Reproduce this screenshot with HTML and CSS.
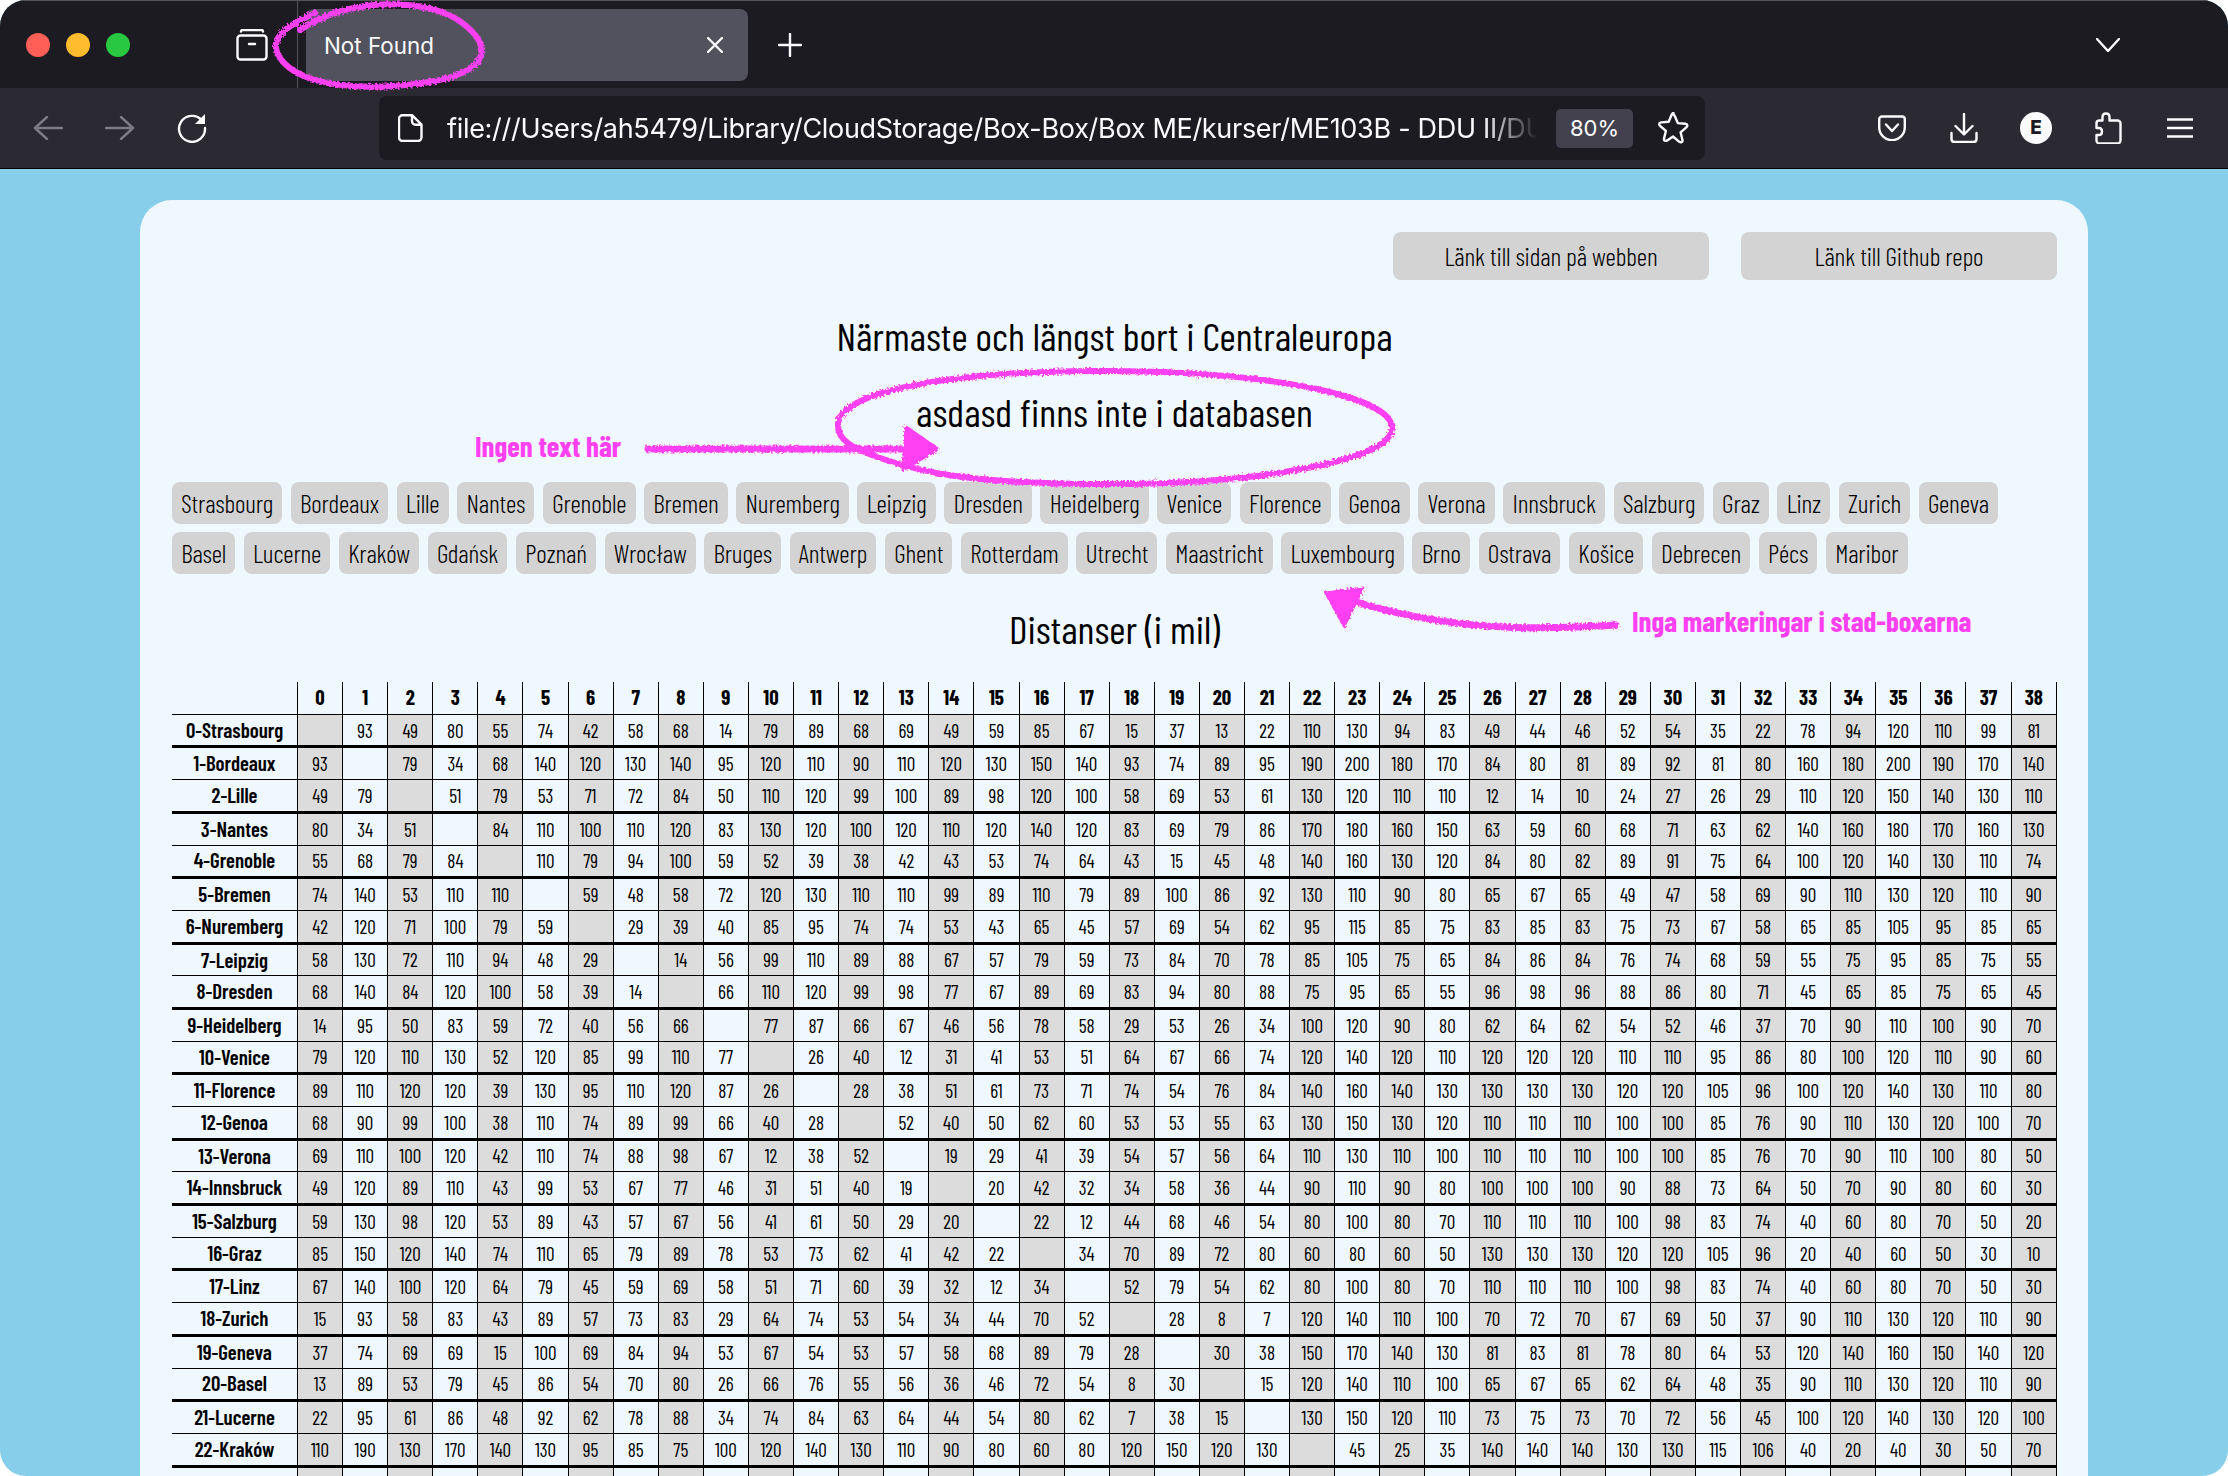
FILE: index.html
```html
<!DOCTYPE html>
<html>

<head>
<meta charset="utf-8">
<title>Not Found</title>
<link rel="stylesheet" href="styles.css">
</head>

<body>
	<div class="window">
		<div class="tabbar">
			<div class="lights">
				<span class="light red"></span>
				<span class="light yellow"></span>
				<span class="light green"></span>
			</div>
			<svg class="view-icon" viewBox="0 0 32 32">
				<path d="M5 2.500q0-1.500 1.500-1.500h19q1.500 0 1.500 1.500" />
				<rect x="1.500" y="6.500" width="29" height="24" rx="3" />
				<path d="M13 15h6" />
			</svg>
			<div class="divider"></div>
			<div class="tab">
				<span class="tab-title">Not Found</span>
				<svg class="tab-close" viewBox="0 0 16 16"><path d="M1 1l14 14M15 1L1 15" /></svg>
			</div>
			<svg class="plus" viewBox="0 0 24 24"><path d="M12 1v22M1 12h22" /></svg>
			<svg class="chevron" viewBox="0 0 24 14"><path d="M1 1l11 12L23 1" /></svg>
		</div>

		<div class="toolbar">
			<div class="tool">
				<svg class="dim" width="30" height="24" viewBox="0 0 30 24"><path d="M14 1L2 12l12 11M2 12h27" /></svg>
			</div>
			<div class="tool">
				<svg class="dim" width="30" height="24" viewBox="0 0 30 24"><path d="M16 1l12 11-12 11M28 12H1" /></svg>
			</div>
			<div class="tool">
				<svg width="30" height="30" viewBox="0 0 30 30">
					<path d="M25 7.500A13 13 0 1 0 28 15" />
					<path class="solid" d="M28 1v10H18z" />
				</svg>
			</div>

			<div class="urlbar">
				<svg class="doc" viewBox="0 0 25 28"><path d="M4.500 1.200h9.500l9.500 9.500v12.800a3.500 3.500 0 0 1-3.500 3.500H4.500A3.500 3.500 0 0 1 1 23.500V4.700a3.500 3.500 0 0 1 3.500-3.500zM14 1.200v6a3.500 3.500 0 0 0 3.500 3.500h6" /></svg>
				<span class="url">file:///Users/ah5479/Library/CloudStorage/Box-Box/Box ME/kurser/ME103B - DDU II/DU</span>
				<span class="zoom-level">80%</span>
				<svg class="star" viewBox="0 0 32 32"><path d="M16 2.500q1.200 0 1.900 1.700l2.900 6.900 7.500.7q1.800.2 2 1.400.3 1.100-1 2.200l-5.700 4.900 1.800 7.400q.4 1.700-.6 2.300-1 .7-2.500-.2L16 24.500l-5.800 3.900q-1.500.9-2.500.2-1-.6-.6-2.300l1.800-7.400-5.700-4.900q-1.300-1.100-1-2.200.2-1.200 2-1.400l7.500-.7 2.900-6.900q.7-1.700 1.900-1.700z" /></svg>
			</div>

			<div class="tools-right">
				<div class="tool">
					<svg width="28" height="26" viewBox="0 0 28 26"><path d="M4 1.500h20a2.800 2.800 0 0 1 2.800 2.800v8a12.800 12.800 0 0 1-25.600 0v-8A2.800 2.800 0 0 1 4 1.500zM8 9.500l6 6.500 6-6.500" /></svg>
				</div>
				<div class="tool">
					<svg width="28" height="30" viewBox="0 0 28 30"><path d="M14 1v20M5.500 13l8.500 8.500 8.500-8.500M1.500 20v6q0 3 3 3h19q3 0 3-3v-6" /></svg>
				</div>
				<div class="tool">
					<span class="avatar">E</span>
				</div>
				<div class="tool">
					<svg width="28" height="32" viewBox="0 0 28 32"><path d="M12 1.500q3.500 0 3.500 3.500v3.500h8a3 3 0 0 1 3 3v17a3 3 0 0 1-3 3H5.500a3 3 0 0 1-3-3V23H5q3 0 3-3.500T5 16H2.500v-5q0-2.500 3-2.500h3V5q0-3.500 3.500-3.500z" /></svg>
				</div>
				<div class="tool">
					<svg width="26" height="20" viewBox="0 0 26 20"><path d="M0 1.500h26M0 10h26M0 18.500h26" /></svg>
				</div>
			</div>
		</div>

		<div class="page">
			<div class="card">
				<div class="links">
					<a class="link-btn" href="#">Länk till sidan på webben</a>
					<a class="link-btn" href="#">Länk till Github repo</a>
				</div>

				<h2 class="heading">Närmaste och längst bort i Centraleuropa</h2>
				<h2 class="heading result">asdasd finns inte i databasen</h2>

				<div class="cities">
					<span class="city">Strasbourg</span>
					<span class="city">Bordeaux</span>
					<span class="city">Lille</span>
					<span class="city">Nantes</span>
					<span class="city">Grenoble</span>
					<span class="city">Bremen</span>
					<span class="city">Nuremberg</span>
					<span class="city">Leipzig</span>
					<span class="city">Dresden</span>
					<span class="city">Heidelberg</span>
					<span class="city">Venice</span>
					<span class="city">Florence</span>
					<span class="city">Genoa</span>
					<span class="city">Verona</span>
					<span class="city">Innsbruck</span>
					<span class="city">Salzburg</span>
					<span class="city">Graz</span>
					<span class="city">Linz</span>
					<span class="city">Zurich</span>
					<span class="city">Geneva</span>
					<span class="city">Basel</span>
					<span class="city">Lucerne</span>
					<span class="city">Kraków</span>
					<span class="city">Gdańsk</span>
					<span class="city">Poznań</span>
					<span class="city">Wrocław</span>
					<span class="city">Bruges</span>
					<span class="city">Antwerp</span>
					<span class="city">Ghent</span>
					<span class="city">Rotterdam</span>
					<span class="city">Utrecht</span>
					<span class="city">Maastricht</span>
					<span class="city">Luxembourg</span>
					<span class="city">Brno</span>
					<span class="city">Ostrava</span>
					<span class="city">Košice</span>
					<span class="city">Debrecen</span>
					<span class="city">Pécs</span>
					<span class="city">Maribor</span>
				</div>

				<h2 class="heading distances">Distanser (i mil)</h2>

				<table class="distance-table">
					<tr class="head"><th></th><th>0<th>1<th>2<th>3<th>4<th>5<th>6<th>7<th>8<th>9<th>10<th>11<th>12<th>13<th>14<th>15<th>16<th>17<th>18<th>19<th>20<th>21<th>22<th>23<th>24<th>25<th>26<th>27<th>28<th>29<th>30<th>31<th>32<th>33<th>34<th>35<th>36<th>37<th>38</tr>
					<tr><th>0-Strasbourg</th><td><td>93<td>49<td>80<td>55<td>74<td>42<td>58<td>68<td>14<td>79<td>89<td>68<td>69<td>49<td>59<td>85<td>67<td>15<td>37<td>13<td>22<td>110<td>130<td>94<td>83<td>49<td>44<td>46<td>52<td>54<td>35<td>22<td>78<td>94<td>120<td>110<td>99<td>81</tr>
					<tr><th>1-Bordeaux</th><td>93<td><td>79<td>34<td>68<td>140<td>120<td>130<td>140<td>95<td>120<td>110<td>90<td>110<td>120<td>130<td>150<td>140<td>93<td>74<td>89<td>95<td>190<td>200<td>180<td>170<td>84<td>80<td>81<td>89<td>92<td>81<td>80<td>160<td>180<td>200<td>190<td>170<td>140</tr>
					<tr><th>2-Lille</th><td>49<td>79<td><td>51<td>79<td>53<td>71<td>72<td>84<td>50<td>110<td>120<td>99<td>100<td>89<td>98<td>120<td>100<td>58<td>69<td>53<td>61<td>130<td>120<td>110<td>110<td>12<td>14<td>10<td>24<td>27<td>26<td>29<td>110<td>120<td>150<td>140<td>130<td>110</tr>
					<tr><th>3-Nantes</th><td>80<td>34<td>51<td><td>84<td>110<td>100<td>110<td>120<td>83<td>130<td>120<td>100<td>120<td>110<td>120<td>140<td>120<td>83<td>69<td>79<td>86<td>170<td>180<td>160<td>150<td>63<td>59<td>60<td>68<td>71<td>63<td>62<td>140<td>160<td>180<td>170<td>160<td>130</tr>
					<tr><th>4-Grenoble</th><td>55<td>68<td>79<td>84<td><td>110<td>79<td>94<td>100<td>59<td>52<td>39<td>38<td>42<td>43<td>53<td>74<td>64<td>43<td>15<td>45<td>48<td>140<td>160<td>130<td>120<td>84<td>80<td>82<td>89<td>91<td>75<td>64<td>100<td>120<td>140<td>130<td>110<td>74</tr>
					<tr><th>5-Bremen</th><td>74<td>140<td>53<td>110<td>110<td><td>59<td>48<td>58<td>72<td>120<td>130<td>110<td>110<td>99<td>89<td>110<td>79<td>89<td>100<td>86<td>92<td>130<td>110<td>90<td>80<td>65<td>67<td>65<td>49<td>47<td>58<td>69<td>90<td>110<td>130<td>120<td>110<td>90</tr>
					<tr><th>6-Nuremberg</th><td>42<td>120<td>71<td>100<td>79<td>59<td><td>29<td>39<td>40<td>85<td>95<td>74<td>74<td>53<td>43<td>65<td>45<td>57<td>69<td>54<td>62<td>95<td>115<td>85<td>75<td>83<td>85<td>83<td>75<td>73<td>67<td>58<td>65<td>85<td>105<td>95<td>85<td>65</tr>
					<tr><th>7-Leipzig</th><td>58<td>130<td>72<td>110<td>94<td>48<td>29<td><td>14<td>56<td>99<td>110<td>89<td>88<td>67<td>57<td>79<td>59<td>73<td>84<td>70<td>78<td>85<td>105<td>75<td>65<td>84<td>86<td>84<td>76<td>74<td>68<td>59<td>55<td>75<td>95<td>85<td>75<td>55</tr>
					<tr><th>8-Dresden</th><td>68<td>140<td>84<td>120<td>100<td>58<td>39<td>14<td><td>66<td>110<td>120<td>99<td>98<td>77<td>67<td>89<td>69<td>83<td>94<td>80<td>88<td>75<td>95<td>65<td>55<td>96<td>98<td>96<td>88<td>86<td>80<td>71<td>45<td>65<td>85<td>75<td>65<td>45</tr>
					<tr><th>9-Heidelberg</th><td>14<td>95<td>50<td>83<td>59<td>72<td>40<td>56<td>66<td><td>77<td>87<td>66<td>67<td>46<td>56<td>78<td>58<td>29<td>53<td>26<td>34<td>100<td>120<td>90<td>80<td>62<td>64<td>62<td>54<td>52<td>46<td>37<td>70<td>90<td>110<td>100<td>90<td>70</tr>
					<tr><th>10-Venice</th><td>79<td>120<td>110<td>130<td>52<td>120<td>85<td>99<td>110<td>77<td><td>26<td>40<td>12<td>31<td>41<td>53<td>51<td>64<td>67<td>66<td>74<td>120<td>140<td>120<td>110<td>120<td>120<td>120<td>110<td>110<td>95<td>86<td>80<td>100<td>120<td>110<td>90<td>60</tr>
					<tr><th>11-Florence</th><td>89<td>110<td>120<td>120<td>39<td>130<td>95<td>110<td>120<td>87<td>26<td><td>28<td>38<td>51<td>61<td>73<td>71<td>74<td>54<td>76<td>84<td>140<td>160<td>140<td>130<td>130<td>130<td>130<td>120<td>120<td>105<td>96<td>100<td>120<td>140<td>130<td>110<td>80</tr>
					<tr><th>12-Genoa</th><td>68<td>90<td>99<td>100<td>38<td>110<td>74<td>89<td>99<td>66<td>40<td>28<td><td>52<td>40<td>50<td>62<td>60<td>53<td>53<td>55<td>63<td>130<td>150<td>130<td>120<td>110<td>110<td>110<td>100<td>100<td>85<td>76<td>90<td>110<td>130<td>120<td>100<td>70</tr>
					<tr><th>13-Verona</th><td>69<td>110<td>100<td>120<td>42<td>110<td>74<td>88<td>98<td>67<td>12<td>38<td>52<td><td>19<td>29<td>41<td>39<td>54<td>57<td>56<td>64<td>110<td>130<td>110<td>100<td>110<td>110<td>110<td>100<td>100<td>85<td>76<td>70<td>90<td>110<td>100<td>80<td>50</tr>
					<tr><th>14-Innsbruck</th><td>49<td>120<td>89<td>110<td>43<td>99<td>53<td>67<td>77<td>46<td>31<td>51<td>40<td>19<td><td>20<td>42<td>32<td>34<td>58<td>36<td>44<td>90<td>110<td>90<td>80<td>100<td>100<td>100<td>90<td>88<td>73<td>64<td>50<td>70<td>90<td>80<td>60<td>30</tr>
					<tr><th>15-Salzburg</th><td>59<td>130<td>98<td>120<td>53<td>89<td>43<td>57<td>67<td>56<td>41<td>61<td>50<td>29<td>20<td><td>22<td>12<td>44<td>68<td>46<td>54<td>80<td>100<td>80<td>70<td>110<td>110<td>110<td>100<td>98<td>83<td>74<td>40<td>60<td>80<td>70<td>50<td>20</tr>
					<tr><th>16-Graz</th><td>85<td>150<td>120<td>140<td>74<td>110<td>65<td>79<td>89<td>78<td>53<td>73<td>62<td>41<td>42<td>22<td><td>34<td>70<td>89<td>72<td>80<td>60<td>80<td>60<td>50<td>130<td>130<td>130<td>120<td>120<td>105<td>96<td>20<td>40<td>60<td>50<td>30<td>10</tr>
					<tr><th>17-Linz</th><td>67<td>140<td>100<td>120<td>64<td>79<td>45<td>59<td>69<td>58<td>51<td>71<td>60<td>39<td>32<td>12<td>34<td><td>52<td>79<td>54<td>62<td>80<td>100<td>80<td>70<td>110<td>110<td>110<td>100<td>98<td>83<td>74<td>40<td>60<td>80<td>70<td>50<td>30</tr>
					<tr><th>18-Zurich</th><td>15<td>93<td>58<td>83<td>43<td>89<td>57<td>73<td>83<td>29<td>64<td>74<td>53<td>54<td>34<td>44<td>70<td>52<td><td>28<td>8<td>7<td>120<td>140<td>110<td>100<td>70<td>72<td>70<td>67<td>69<td>50<td>37<td>90<td>110<td>130<td>120<td>110<td>90</tr>
					<tr><th>19-Geneva</th><td>37<td>74<td>69<td>69<td>15<td>100<td>69<td>84<td>94<td>53<td>67<td>54<td>53<td>57<td>58<td>68<td>89<td>79<td>28<td><td>30<td>38<td>150<td>170<td>140<td>130<td>81<td>83<td>81<td>78<td>80<td>64<td>53<td>120<td>140<td>160<td>150<td>140<td>120</tr>
					<tr><th>20-Basel</th><td>13<td>89<td>53<td>79<td>45<td>86<td>54<td>70<td>80<td>26<td>66<td>76<td>55<td>56<td>36<td>46<td>72<td>54<td>8<td>30<td><td>15<td>120<td>140<td>110<td>100<td>65<td>67<td>65<td>62<td>64<td>48<td>35<td>90<td>110<td>130<td>120<td>110<td>90</tr>
					<tr><th>21-Lucerne</th><td>22<td>95<td>61<td>86<td>48<td>92<td>62<td>78<td>88<td>34<td>74<td>84<td>63<td>64<td>44<td>54<td>80<td>62<td>7<td>38<td>15<td><td>130<td>150<td>120<td>110<td>73<td>75<td>73<td>70<td>72<td>56<td>45<td>100<td>120<td>140<td>130<td>120<td>100</tr>
					<tr><th>22-Kraków</th><td>110<td>190<td>130<td>170<td>140<td>130<td>95<td>85<td>75<td>100<td>120<td>140<td>130<td>110<td>90<td>80<td>60<td>80<td>120<td>150<td>120<td>130<td><td>45<td>25<td>35<td>140<td>140<td>140<td>130<td>130<td>115<td>106<td>40<td>20<td>40<td>30<td>50<td>70</tr>
					<tr><th></th>
						<td><td><td><td><td><td><td><td><td><td>
						<td><td><td><td><td><td><td><td><td><td>
						<td><td><td><td><td><td><td><td><td><td>
						<td><td><td><td><td><td><td><td><td>
					</tr>
				</table>
			</div>
		</div>

		<!-- hand drawn notes on top of the shot -->
		<svg class="marks" viewBox="0 0 2228 1476">
			<defs>
				<filter id="rough" x="-5%" y="-5%" width="110%" height="110%">
					<feTurbulence type="fractalNoise" baseFrequency="0.45" numOctaves="2" seed="4" />
					<feDisplacementMap in="SourceGraphic" scale="5" />
				</filter>
			</defs>
			<g filter="url(#rough)">
				<path class="pen" d="M300 30C345 -2 430 -5 465 25C495 50 485 72 430 82C365 92 300 87 280 58C268 40 282 28 315 13" />
				<path class="pen" d="M838 425C838 395 930 372 1095 371C1260 370 1392 395 1392 428C1392 462 1250 484 1110 484C960 484 915 470 880 458C850 447 838 440 838 425" />
				<path class="pen thick" d="M648 449L910 449" />
				<path class="ink" d="M906 427L938 449L903 470z" />
				<path class="pen thick" d="M1616 625C1540 630 1450 632 1350 600" />
				<path class="ink" d="M1326 593L1363 588L1344 626z" />
			</g>
		</svg>
		<div class="note note-text">Ingen text här</div>
		<div class="note note-cities">Inga markeringar i stad-boxarna</div>
	</div>
</body>

</html>
```

FILE: styles.css
```css
html,
body {
	margin: 0;
	height: 1476px;
	overflow: hidden;
	background-color: white;
}

.window {
	position: relative;
	height: 1476px;
	overflow: hidden;
	border-radius: 26px;
	background-color: skyblue;
	display: flex;
	flex-direction: column;
}

/* browser chrome */
.tabbar {
	height: 87px;
	flex: none;
	border-top: 1px solid #55545c;
	background-color: #1c1b22;
	display: flex;
	align-items: center;
	color: #fbfbfe;
	font-family: Inter, sans-serif;
}

.lights {
	margin-left: 26px;
	display: flex;
	gap: 16px;
}

.light {
	width: 24px;
	height: 24px;
	border-radius: 50%;
}

.red {
	background-color: #ff5f57;
}

.yellow {
	background-color: #febc2e;
}

.green {
	background-color: #28c840;
}

svg path,
svg rect {
	fill: none;
	stroke: #fbfbfe;
	stroke-width: 2.4;
	stroke-linecap: round;
	stroke-linejoin: round;
}

.view-icon {
	width: 32px;
	height: 32px;
	margin-left: 106px;
}

.divider {
	width: 1px;
	height: 87px;
	margin-left: 29px;
	background-color: #55545c;
}

.tab {
	width: 442px;
	height: 72px;
	margin-left: 8px;
	box-sizing: border-box;
	padding: 0 25px 0 18px;
	border-radius: 8px;
	background-color: #52525e;
	display: flex;
	align-items: center;
	justify-content: space-between;
}

.tab-title {
	padding-top: 2px;
	font-size: 22.400px;
}

.tab-close {
	width: 16px;
	height: 16px;
}

.plus {
	width: 24px;
	height: 24px;
	margin-left: 30px;
}

.chevron {
	width: 24px;
	height: 14px;
	margin-left: auto;
	margin-right: 108px;
}

.toolbar {
	height: 81px;
	flex: none;
	box-sizing: border-box;
	padding: 0 12px;
	border-bottom: 1px solid #000;
	background-color: #2b2a33;
	display: flex;
	align-items: center;
	color: #fbfbfe;
	font-family: Inter, sans-serif;
}

.tool {
	width: 72px;
	height: 64px;
	display: flex;
	align-items: center;
	justify-content: center;
}

.dim path {
	stroke: #7d7c84;
}

svg path.solid {
	fill: #fbfbfe;
	stroke: none;
}

.urlbar {
	width: 1326px;
	height: 64px;
	margin-left: 151px;
	box-sizing: border-box;
	padding-left: 19px;
	border-radius: 8px;
	background-color: #1c1b22;
	display: flex;
	align-items: center;
}

.doc {
	width: 25px;
	height: 28px;
	flex: none;
}

.url {
	width: 1102px;
	margin-left: 24px;
	flex: none;
	white-space: nowrap;
	font-size: 27px;
	letter-spacing: -0.300px;
	-webkit-mask-image: linear-gradient(to right, black 94%, transparent 99%);
	mask-image: linear-gradient(to right, black 94%, transparent 99%);
}

.zoom-level {
	width: 77px;
	height: 39px;
	margin-left: 7px;
	flex: none;
	border-radius: 5px;
	background-color: #42414d;
	font-size: 22px;
	line-height: 39px;
	text-align: center;
}

.star {
	width: 32px;
	height: 32px;
	margin-left: 24px;
}

.tools-right {
	margin-left: auto;
	display: flex;
}

.avatar {
	width: 32px;
	height: 32px;
	border-radius: 50%;
	background-color: #fbfbfe;
	color: #1c1b22;
	font-size: 19px;
	font-weight: 800;
	line-height: 32px;
	text-align: center;
}

/* the page itself */
.page {
	flex: 1;
	padding: 31px 140px 0;
	min-height: 0;
}

.card {
	height: 1400px;
	box-sizing: border-box;
	padding: 32px 31px 32px 32px;
	border-radius: 32px;
	background-color: aliceblue;
	font-family: "Barlow Condensed", "Liberation Sans", sans-serif;
	color: black;
}

.links {
	display: flex;
	justify-content: flex-end;
	gap: 32px;
}

.link-btn {
	width: 316px;
	height: 48px;
	border-radius: 8px;
	background-color: lightgray;
	color: black;
	font-size: 25.600px;
	font-weight: 300;
	letter-spacing: -0.120px;
	line-height: 48px;
	text-align: center;
	text-decoration: none;
}

.heading {
	margin: 32px 0 0;
	font-size: 39.700px;
	font-weight: 400;
	line-height: 46px;
	text-align: center;
}

.result {
	margin-top: 30px;
}

.distances {
	margin-top: 31px;
}

.cities {
	margin-top: 48px;
	display: flex;
	flex-wrap: wrap;
	gap: 8.400px 8.600px;
}

.city {
	height: 41.600px;
	padding: 0 9.200px;
	border-radius: 8px;
	background-color: lightgray;
	font-size: 25.600px;
	font-weight: 300;
	letter-spacing: -0.150px;
	line-height: 41.600px;
}

.distance-table {
	width: 100%;
	margin-top: 31px;
	border-collapse: collapse;
	table-layout: fixed;
	font-size: 19.200px;
	text-align: center;
}

.distance-table tr {
	height: 32.700px;
}

.distance-table th,
.distance-table td {
	padding: 0;
	border: 1px solid black;
	line-height: 1;
}

.distance-table th {
	font-size: 20.800px;
	font-weight: 600;
}

.distance-table th:first-child {
	width: 125px;
	border-left: none;
}

.distance-table .head th {
	border-top: none;
	height: 31px;
	font-weight: 700;
}

.distance-table td:nth-child(even) {
	background-color: gainsboro;
}

.distance-table tr:nth-child(even) th,
.distance-table tr:nth-child(even) td {
	border-bottom: 3px solid black;
}

/* notes */
.marks {
	position: absolute;
	left: 0;
	top: 0;
	width: 2228px;
	height: 1476px;
	pointer-events: none;
}

.marks path.pen {
	stroke: #ff40f2;
	stroke-width: 6;
}

.marks path.thick {
	stroke-width: 7;
}

.marks path.ink {
	fill: #ff40f2;
	stroke: #ff40f2;
	stroke-width: 3;
}

.note {
	position: absolute;
	color: #ff40f2;
	font-family: "Barlow Condensed", "Liberation Sans", sans-serif;
	font-size: 28.800px;
	font-weight: 700;
	white-space: nowrap;
}

.note-text {
	left: 475px;
	top: 428px;
}

.note-cities {
	left: 1632px;
	top: 603px;
}
```
